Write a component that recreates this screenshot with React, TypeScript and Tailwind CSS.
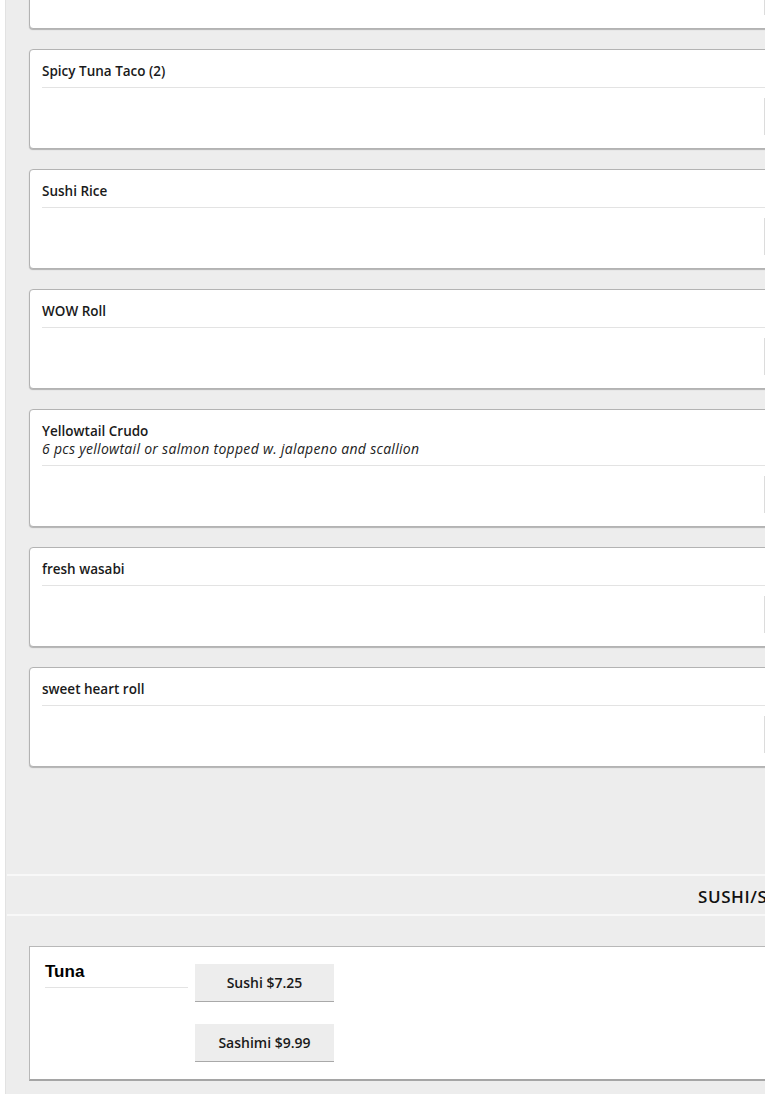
import React from 'react';

interface Item {
  name: string;
  desc?: string;
}

const items: Item[] = [
  { name: 'Spicy Tuna Taco (2)' },
  { name: 'Sushi Rice' },
  { name: 'WOW Roll' },
  { name: 'Yellowtail Crudo', desc: '6 pcs yellowtail or salmon topped w. jalapeno and scallion' },
  { name: 'fresh wasabi' },
  { name: 'sweet heart roll' },
];

const font = { fontFamily: "'Open Sans', Lato, sans-serif" };

const ItemCard: React.FC<{ item?: Item }> = ({ item }) => (
  <div className="w-[1400px] shrink-0 bg-white border border-[#b3b3b3] rounded-[4px] shadow-[0_1px_1px_rgba(0,0,0,0.25)]">
    <div className="mx-[12px] pt-[12px] pb-[7px] border-b border-[#e3e3e3]">
      <div className="min-h-[18px] text-[13.5px] leading-[18px] font-semibold text-[#1a1a1a]">
        {item?.name}
      </div>
      {item?.desc && (
        <div className="text-[14px] leading-[18px] italic tracking-[0.3px] text-[#222]">{item.desc}</div>
      )}
    </div>
    <div className="flex h-[60px] pl-[12px] pt-[10px]">
      <div className="w-[722px] shrink-0" />
      <div className="w-[140px] h-[37px] border-l border-[#dcdcdc]" />
    </div>
  </div>
);

export default function App() {
  return (
    <div className="w-[765px] h-[1094px] overflow-hidden bg-white" style={font}>
      <div className="flex h-full">
        <div className="w-[6px] shrink-0 bg-white border-r border-[#e2e2e2]" />
        <div className="flex-1 bg-[#ededed] overflow-hidden">
          <div className="flex flex-col gap-[20px] pl-[23px] -mt-[71px]">
            <ItemCard />
            {items.map((it) => (
              <ItemCard key={it.name} item={it} />
            ))}
          </div>

          <div className="h-[107px]" />

          <div className="ml-[1px] w-[1400px] border-y-2 border-[#f8f8f8] h-[42px] flex items-center pl-[691px] pt-[3px]">
            <span className="text-[17px] font-semibold tracking-[0.6px] text-[#111]">SUSHI/SASHIMI</span>
          </div>

          <div className="pl-[23px] pt-[30px]">
            <div className="w-[1400px] bg-white border border-[#b8b8b8] border-b-2 border-b-[#a5a5a5] flex px-[15px] py-[17px]">
              <div className="w-[143px] shrink-0">
                <div
                  className="text-[17px] leading-[16px] font-bold text-black pb-[7px] border-b border-[#e3e3e3]"
                  style={{ fontFamily: "'Liberation Sans', Arial, sans-serif" }}
                >
                  Tuna
                </div>
              </div>
              <div className="ml-[7px] flex flex-col gap-[22px]">
                {['Sushi $7.25', 'Sashimi $9.99'].map((b) => (
                  <div
                    key={b}
                    className="w-[139px] h-[38px] bg-[#ededed] border-b border-[#a9a9a9] flex items-center justify-center text-[14px] font-semibold text-[#1a1a1a]"
                  >
                    {b}
                  </div>
                ))}
              </div>
            </div>
          </div>
        </div>
      </div>
    </div>
  );
}
